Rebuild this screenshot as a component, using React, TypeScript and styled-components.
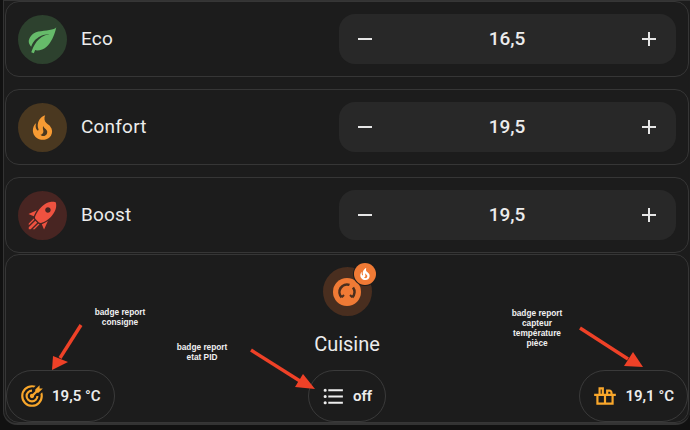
import styled, { createGlobalStyle } from 'styled-components';

const GlobalStyle = createGlobalStyle`
  html, body {
    margin: 0;
    padding: 0;
    background: #111111;
  }
`;

const paths = {
  leaf: 'M17,8C8,10 5.9,16.17 3.82,21.34L5.71,22L6.66,19.7C7.14,19.87 7.64,20 8,20C19,20 22,3 22,3C21,5 14,5.25 9,6.25C4,7.25 2,11.5 2,13.5C2,15.5 3.75,17.25 3.75,17.25C7,8 17,8 17,8Z',
  fire: 'M17.66 11.2C17.43 10.9 17.15 10.64 16.89 10.38C16.22 9.78 15.46 9.35 14.82 8.72C13.33 7.26 13 4.85 13.95 3C13 3.23 12.17 3.75 11.46 4.32C8.87 6.4 7.85 10.07 9.07 13.22C9.11 13.32 9.15 13.42 9.15 13.55C9.15 13.77 9 13.97 8.8 14.05C8.57 14.15 8.33 14.09 8.14 13.93C8.08 13.88 8.04 13.83 8 13.76C6.87 12.33 6.69 10.28 7.45 8.64C5.78 10 4.87 12.3 5 14.47C5.06 14.97 5.12 15.47 5.29 15.97C5.43 16.57 5.7 17.17 6 17.7C7.08 19.43 8.95 20.67 10.96 20.92C13.1 21.19 15.39 20.8 17.03 19.32C18.86 17.66 19.5 15 18.56 12.72L18.43 12.46C18.22 12 17.66 11.2 17.66 11.2M14.5 17.5C14.22 17.74 13.76 18 13.4 18.1C12.28 18.5 11.16 17.94 10.5 17.28C11.69 17 12.4 16.12 12.61 15.23C12.78 14.43 12.46 13.77 12.33 13C12.21 12.26 12.23 11.63 12.5 10.94C12.69 11.32 12.89 11.7 13.13 12C13.9 13 15.11 13.44 15.37 14.8C15.41 14.94 15.43 15.08 15.43 15.23C15.46 16.05 15.1 16.95 14.5 17.5H14.5Z',
  rocket: 'M13.13 22.19L11.5 18.36C13.07 17.78 14.54 17 15.9 16.09L13.13 22.19M5.64 12.5L1.81 10.87L7.91 8.1C7 9.46 6.22 10.93 5.64 12.5M21.61 2.39C21.61 2.39 16.66 .269 11 5.93C8.81 8.12 7.5 10.53 6.65 12.64C6.37 13.39 6.56 14.21 7.11 14.77L9.24 16.89C9.79 17.45 10.61 17.64 11.36 17.36C13.5 16.54 15.88 15.19 18.07 13C23.73 7.34 21.61 2.39 21.61 2.39M14.54 9.46C13.76 8.68 13.76 7.41 14.54 6.63S16.59 5.85 17.37 6.63C18.14 7.41 18.15 8.68 17.37 9.46C16.59 10.24 15.32 10.24 14.54 9.46M6.24 22L9.88 18.36C9.54 18.27 9.21 18.12 8.91 17.91L4.83 22H6.24M2 22H3.41L8.18 17.24L6.76 15.83L2 20.59V22M2 19.17L6.09 15.09C5.88 14.79 5.73 14.47 5.64 14.12L2 17.76V19.17Z',
  target: 'M12,2A10,10 0 0,0 2,12A10,10 0 0,0 12,22A10,10 0 0,0 22,12C22,10.84 21.79,9.69 21.39,8.61L19.79,10.21C19.93,10.8 20,11.4 20,12A8,8 0 0,1 12,20A8,8 0 0,1 4,12A8,8 0 0,1 12,4C12.6,4 13.2,4.07 13.79,4.21L15.4,2.6C14.31,2.21 13.16,2 12,2M19,2L15,6V7.5L12.45,10.05C12.3,10 12.15,10 12,10A2,2 0 0,0 10,12A2,2 0 0,0 12,14A2,2 0 0,0 14,12C14,11.85 14,11.7 13.95,11.55L16.5,9H18L22,5H19V2M12,6A6,6 0 0,0 6,12A6,6 0 0,0 12,18A6,6 0 0,0 18,12H16A4,4 0 0,1 12,16A4,4 0 0,1 8,12A4,4 0 0,1 12,8V6Z',
  list: 'M7,5H21V7H7V5M7,13V11H21V13H7M4,4.5A1.5,1.5 0 0,1 5.5,6A1.5,1.5 0 0,1 4,7.5A1.5,1.5 0 0,1 2.5,6A1.5,1.5 0 0,1 4,4.5M4,10.5A1.5,1.5 0 0,1 5.5,12A1.5,1.5 0 0,1 4,13.5A1.5,1.5 0 0,1 2.5,12A1.5,1.5 0 0,1 4,10.5M7,19V17H21V19H7M4,16.5A1.5,1.5 0 0,1 5.5,18A1.5,1.5 0 0,1 4,19.5A1.5,1.5 0 0,1 2.5,18A1.5,1.5 0 0,1 4,16.5Z',
  plus: 'M19,13H13V19H11V13H5V11H11V5H13V11H19V13Z',
  minus: 'M19,13H5V11H19V13Z',
  pot: 'M2 10H22V12H20V20H4V12H2V10M6 12V18H11V12H6M13 12V18H18V12H13M6 4H11V10H9V6H8V10H6V4M13 6H16C17.7 6 19 7.3 19 9V10H17V9C17 8.4 16.6 8 16 8H15V10H13V6Z',
};

type IconName = keyof typeof paths;

const Icon = ({ name, size, color }: { name: IconName; size: number; color: string }) => (
  <svg width={size} height={size} viewBox="0 0 24 24" fill={color}>
    <path d={paths[name]} />
  </svg>
);

const modes: { label: string; value: string; icon: IconName; color: string; tint: string }[] = [
  { label: 'Eco', value: '16,5', icon: 'leaf', color: '#66bb6a', tint: '#2d412e' },
  { label: 'Confort', value: '19,5', icon: 'fire', color: '#f79b33', tint: '#4a3820' },
  { label: 'Boost', value: '19,5', icon: 'rocket', color: '#ef5240', tint: '#482522' },
];

const App = () => (
  <>
    <GlobalStyle />
    <Page>
      <Column>
        {modes.map((m) => (
          <ModeCard key={m.label}>
            <IconCircle $tint={m.tint}>
              <Icon name={m.icon} size={33} color={m.color} />
            </IconCircle>
            <ModeName>{m.label}</ModeName>
            <Stepper>
              <Icon name="minus" size={24} color="#e6e6e6" />
              <StepValue>{m.value}</StepValue>
              <Icon name="plus" size={24} color="#e6e6e6" />
            </Stepper>
          </ModeCard>
        ))}
        <RoomCard>
          <RoomHead>
            <RoomIcon>
              <Gauge viewBox="0 0 28 28">
                <circle cx="14" cy="14" r="14" fill="#f07a35" />
                <path d="M8.7 19.3A7.5 7.5 0 0 1 16.5 6.9" fill="none" stroke="#4a2e1e" strokeWidth="2.6" />
                <path d="M20 9.5A7.5 7.5 0 0 1 19.3 19.3" fill="none" stroke="#4a2e1e" strokeWidth="2.6" />
                <path d="M8.7 19.3L11 17M19.3 19.3L17 17" fill="none" stroke="#4a2e1e" strokeWidth="2" />
              </Gauge>
              <RoomDot>
                <Icon name="fire" size={16} color="#ffffff" />
              </RoomDot>
            </RoomIcon>
            <RoomName>Cuisine</RoomName>
          </RoomHead>
          <BadgeRow>
            <Badge>
              <Icon name="target" size={26} color="#f9a72b" />
              <BadgeText>19,5 °C</BadgeText>
            </Badge>
            <Badge>
              <Icon name="list" size={25} color="#eeeeee" />
              <BadgeText>off</BadgeText>
            </Badge>
            <Badge>
              <Icon name="pot" size={26} color="#f9a72b" />
              <BadgeText>19,1 °C</BadgeText>
            </Badge>
          </BadgeRow>
        </RoomCard>
      </Column>

      <Note $x={120} $y={307}>badge report<br />consigne</Note>
      <Note $x={202} $y={342}>badge report<br />etat PID</Note>
      <Note $x={537} $y={308}>badge report<br />capteur<br />température<br />pièce</Note>
      <ArrowLayer viewBox="0 0 690 430">
        <path d="M81 325L60 358" stroke="#ee4127" strokeWidth="3.4" fill="none" />
        <polygon points="52,370 53,356 68,362" fill="#ee4127" />
        <path d="M251 350L300 381" stroke="#ee4127" strokeWidth="3.4" fill="none" />
        <polygon points="315,389 295,387 303,374" fill="#ee4127" />
        <path d="M580 328L628 359" stroke="#ee4127" strokeWidth="3.4" fill="none" />
        <polygon points="643,367 624,366 633,352" fill="#ee4127" />
      </ArrowLayer>
    </Page>
  </>
);

export default App;

const Page = styled.div`
  position: relative;
  width: 690px;
  height: 430px;
  overflow: hidden;
  box-sizing: border-box;
  font-family: Roboto, "Liberation Sans", sans-serif;
  color: #ececec;
`;

const Column = styled.div`
  box-sizing: border-box;
  width: 690px;
  height: 425px;
  padding: 0 1px 0 1px;
  display: flex;
  flex-direction: column;
  background: #1c1c1c;
  border-top: 1px solid #333333;
  border-left: 1px solid #333333;
  border-bottom: 2px solid #333333;
  border-radius: 0 0 14px 14px;
  margin-left: 3px;
  margin-right: -3px;
  width: 687px;
`;

const ModeCard = styled.div`
  box-sizing: border-box;
  height: 76px;
  margin-bottom: 12px;
  padding: 0 12px;
  display: flex;
  align-items: center;
  border: 1px solid #363636;
  border-radius: 14px;
  background: #1c1c1c;

  &:nth-child(3) {
    margin-bottom: 1px;
  }
`;

const IconCircle = styled.div<{ $tint: string }>`
  width: 49px;
  height: 49px;
  flex: none;
  display: flex;
  align-items: center;
  justify-content: center;
  border-radius: 50%;
  background: ${(p) => p.$tint};
`;

const ModeName = styled.div`
  flex: 1;
  margin-left: 14px;
  padding-bottom: 2px;
  font-size: 19px;
  font-weight: 400;
  letter-spacing: 0.2px;
`;

const Stepper = styled.div`
  box-sizing: border-box;
  width: 337px;
  height: 50px;
  padding: 0 15px 0 14px;
  display: flex;
  align-items: center;
  justify-content: space-between;
  border-radius: 16px;
  background: #282828;
`;

const StepValue = styled.div`
  padding-bottom: 2px;
  font-size: 19px;
  font-weight: 500;
`;

const RoomCard = styled.div`
  box-sizing: border-box;
  flex: 1;
  display: flex;
  flex-direction: column;
  justify-content: space-between;
  border: 1px solid #363636;
  border-radius: 14px;
  background: #1c1c1c;
`;

const RoomHead = styled.div`
  padding-top: 12px;
  display: flex;
  flex-direction: column;
  align-items: center;
`;

const RoomIcon = styled.div`
  position: relative;
  width: 49px;
  height: 49px;
  display: flex;
  align-items: center;
  justify-content: center;
  border-radius: 50%;
  background: #492e1f;
`;

const Gauge = styled.svg`
  width: 28px;
  height: 28px;
`;

const RoomDot = styled.div`
  position: absolute;
  top: -4px;
  right: -4px;
  width: 22px;
  height: 22px;
  display: flex;
  align-items: center;
  justify-content: center;
  border-radius: 50%;
  background: #f07a35;
  box-shadow: 0 0 0 1px #1c1c1c;
`;

const RoomName = styled.div`
  margin-top: 16px;
  font-size: 20px;
  font-weight: 400;
`;

const BadgeRow = styled.div`
  display: flex;
  justify-content: space-between;
`;

const Badge = styled.div`
  box-sizing: border-box;
  height: 52px;
  padding: 0 13px 0 12px;
  display: flex;
  align-items: center;
  gap: 7px;
  border: 1px solid #3a3a3a;
  border-radius: 26px;
`;

const BadgeText = styled.span`
  font-size: 15px;
  font-weight: 600;
`;

const Note = styled.div<{ $x: number; $y: number }>`
  position: absolute;
  left: ${(p) => p.$x}px;
  top: ${(p) => p.$y}px;
  transform: translateX(-50%);
  white-space: nowrap;
  text-align: center;
  font-family: "Liberation Sans", Arial, sans-serif;
  font-size: 8.3px;
  font-weight: 700;
  line-height: 10px;
  color: #f0f0f0;
`;

const ArrowLayer = styled.svg`
  position: absolute;
  inset: 0;
  width: 690px;
  height: 430px;
  pointer-events: none;
`;
